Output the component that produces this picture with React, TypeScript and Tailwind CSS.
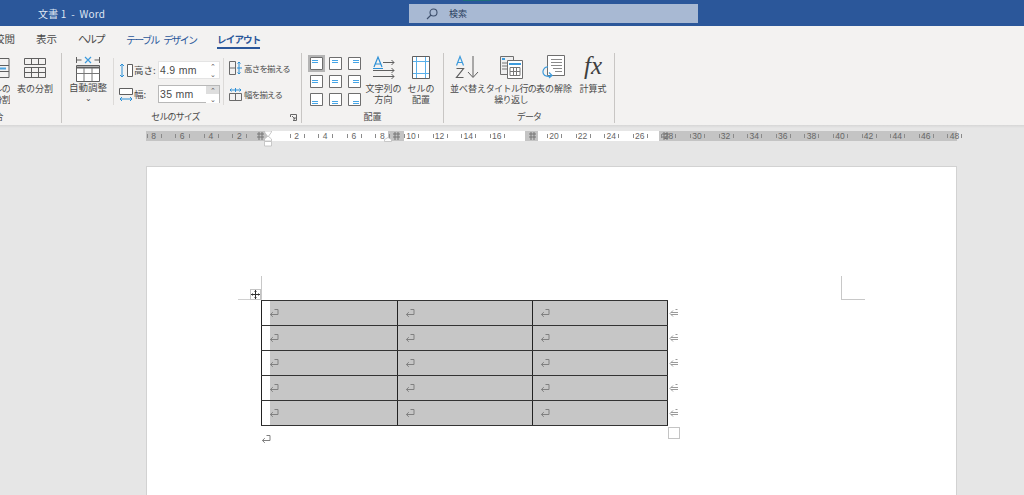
import type { ReactNode } from 'react'

const tabs = [
    { label: '校閲', className: 'w-[36px] -indent-[6px]' },
    { label: '表示', className: 'w-[42px]' },
    { label: 'ヘルプ', className: 'w-[48px] tracking-[-2px]' },
    { label: 'テーブル デザイン', className: 'w-[91px] text-[10px] tracking-[-1.700px] [word-spacing:4px] text-[#2b579a]' },
]

const rulerSegments = [
    { width: 122, gray: true },
    { width: 120, gray: false },
    { width: 16, gray: true },
    { width: 121, gray: false },
    { width: 13, gray: true },
    { width: 121, gray: false },
    { width: 298, gray: true },
]

const rulerUnit = 14.3
const rulerZero = 122
const rulerNumbers = [-8, -6, -4, -2, 2, 4, 6, 8, 10, 12, 14, 16, 20, 22, 24, 26, 28, 30, 32, 34, 36, 38, 40, 42, 44, 46, 48]
const tableMarkers = [111, 247, 383, 516]

const ReturnMark = () => (
    <svg width="10" height="10" viewBox="0 0 10 10" fill="none" stroke="#808080" strokeWidth="1">
        <path d="M5.500 1.500h3.500v5H1.500M3.800 4.200 1.400 6.500l2.400 2.300" />
    </svg>
)

const RowEndMark = () => (
    <svg width="9" height="10" viewBox="0 0 9 10" fill="none" stroke="#9a9a9a" strokeWidth="1">
        <path d="M9 4.500H2M9 6.500H2M4 2.500 1 5.500l3 3M6.500 1.500h2" />
    </svg>
)

const SplitTableIcon = () => (
    <svg width="24" height="22" viewBox="0 0 24 22" fill="none" stroke="#5f5f5f" strokeWidth="1">
        <path d="M1.500 1.500h21v6h-21zM8.500 1.500v6M15.500 1.500v6" />
        <path d="M1.500 10.500h21v10h-21zM1.500 15.500h21M8.500 10.500v10M15.500 10.500v10" />
    </svg>
)

const MergeTableIcon = () => (
    <svg width="10" height="22" viewBox="0 0 10 22" fill="none" strokeWidth="1">
        <path d="M0 1.500h9v19H0M0 8.500h9M0 14.500h9" stroke="#5f5f5f" />
        <path d="M0 11.500h6" stroke="#4aa3df" strokeWidth="2" />
    </svg>
)

const AutoFitIcon = () => (
    <svg width="24" height="26" viewBox="0 0 24 26" fill="none" strokeWidth="1">
        <path d="M.5 1v6M.5 4h5M23.500 1v6M18.500 4h5" stroke="#5f5f5f" />
        <path d="m9 1 6 6M15 1 9 7" stroke="#3d9bdc" strokeWidth="1.200" />
        <path d="M.5 9.500h23v16H.5z" fill="#fff" stroke="#5f5f5f" />
        <path d="M.5 11.500h23" stroke="#5f5f5f" strokeWidth="2" />
        <path d="M.5 17.500h23M8 12v13M16 12v13" stroke="#777" />
    </svg>
)

const HeightIcon = () => (
    <svg width="14" height="15" viewBox="0 0 14 15" fill="none" strokeWidth="1">
        <path d="M3 1v13M1 3l2-2 2 2M1 12l2 2 2-2" stroke="#2b8fd6" />
        <path d="M8.500 1.500h5v12h-5z" fill="#fff" stroke="#5f5f5f" />
    </svg>
)

const WidthIcon = () => (
    <svg width="14" height="15" viewBox="0 0 14 15" fill="none" strokeWidth="1">
        <path d="M.5 1.500h13v6H.5z" fill="#fff" stroke="#5f5f5f" />
        <path d="M1 12h12M3 10l-2 2 2 2M11 10l2 2-2 2" stroke="#2b8fd6" />
    </svg>
)

const DistributeRowsIcon = () => (
    <svg width="13" height="14" viewBox="0 0 13 14" fill="none" strokeWidth="1">
        <path d="M.5.500h6v13h-6zM.5 7h6" stroke="#6a6a6a" />
        <path d="M10 1v12M8.500 2.500 10 1l1.500 1.500M8.500 11.500 10 13l1.500-1.500M8 7h5" stroke="#2b8fd6" />
    </svg>
)

const DistributeColumnsIcon = () => (
    <svg width="13" height="14" viewBox="0 0 13 14" fill="none" strokeWidth="1">
        <path d="M.5 6.500h12v7H.5zM6.500 6.500v7" stroke="#6a6a6a" />
        <path d="M1 3h11M2.500 1.500 1 3l1.500 1.500M10.500 1.500 12 3l-1.500 1.500M6.500 1v4" stroke="#2b8fd6" />
    </svg>
)

const AlignIcon = ({ row, col }: { row: number; col: number }) => {
    const y = [3, 5, 8][row]
    const x = [2, 3, 5][col]
    return (
        <svg width="13" height="13" viewBox="0 0 13 13" fill="none">
            <path d="M.5.500h12v12H.5z" fill="#fff" stroke="#6e6e6e" />
            <path d={`M${x} ${y}.5h6M${x} ${y + 2}.5h6`} stroke="#45a5e6" strokeWidth="1" />
        </svg>
    )
}

const TextDirectionIcon = () => (
    <svg width="24" height="24" viewBox="0 0 24 24" fill="none" strokeWidth="1">
        <path d="M1 13.500h10" stroke="#2b8fd6" />
        <path d="M2 12 6 2l4 10M3.500 9h5" stroke="#2b8fd6" strokeWidth="1.200" />
        <path d="M11 7.500h11M19.500 5 22 7.500 19.500 10M1 15.500h21M19.500 13 22 15.500 19.500 18M1 21.500h21M19.500 19 22 21.500 19.500 24" stroke="#5f5f5f" />
    </svg>
)

const CellMarginIcon = () => (
    <svg width="18" height="23" viewBox="0 0 18 23" fill="none" strokeWidth="1">
        <path d="M.5.500h17v22H.5z" fill="#fff" stroke="#5f5f5f" />
        <path d="M4.500 1v21M13.500 1v21M1 5.500h16M1 17.500h16" stroke="#59b0ea" />
    </svg>
)

const SortIcon = () => (
    <svg width="26" height="24" viewBox="0 0 26 24" fill="none">
        <path d="M1.500 10.500 5 1.500l3.500 9M2.700 7.500h4.600" stroke="#3d9bdc" strokeWidth="1.200" />
        <path d="M1.500 13.500h7l-7 9h7" stroke="#5f5f5f" strokeWidth="1.200" />
        <path d="M18 1v21M13 17l5 5.500 5-5.500" stroke="#5f5f5f" strokeWidth="1" />
    </svg>
)

const RepeatHeaderIcon = () => (
    <svg width="23" height="23" viewBox="0 0 23 23" fill="none" strokeWidth="1">
        <path d="M.5.500h13v18H.5z" fill="#efefef" stroke="#6e6e6e" />
        <path d="M2 2h3v2H2z" fill="#3d9bdc" />
        <path d="M2 7h5M2 10h5M2 13h5" stroke="#777" />
        <path d="M7.500 4.500h15v18h-15z" fill="#fff" stroke="#6e6e6e" />
        <path d="M9 7h12v2H9z" fill="#3d9bdc" />
        <path d="M10 11.500h10v8H10zM10 15.500h10M13.500 11.500v8M16.500 11.500v8" stroke="#777" />
    </svg>
)

const ConvertIcon = () => (
    <svg width="24" height="24" viewBox="0 0 24 24" fill="none" strokeWidth="1">
        <path d="M5.500.500h17v20h-17z" fill="#fff" stroke="#6e6e6e" />
        <path d="M9 4.500h11M9 7.500h11M9 10.500h11M11 13.500h9M13 16.500h7" stroke="#8a8a8a" />
        <path d="M6 12C2 11.500 0 16 1.500 19c1.200 2.400 5 3 8 1.500M7 17.500l3 3-3 2.500" stroke="#3d9bdc" strokeWidth="1.200" />
    </svg>
)

const LaunchIcon = () => (
    <svg width="7" height="7" viewBox="0 0 7 7" fill="none" stroke="#666" strokeWidth="1">
        <path d="M.5 3V.5h6v6H3M2 2l3 3M5 3v2H3" />
    </svg>
)

const RibbonButton = ({ icon, lines, className }: { icon: ReactNode; lines: string[]; className: string }) => (
    <div className={`flex shrink-0 flex-col items-center ${className}`}>
        <div className="flex h-[26px] items-end">{icon}</div>
        <div className="mt-[4px] text-center text-[9px] leading-[11px] whitespace-nowrap">
            {lines.map((line) => (
                <div key={line}>{line}</div>
            ))}
        </div>
    </div>
)

const RibbonGroup = ({ label, className, labelClass, children }: { label: string; className: string; labelClass?: string; children: ReactNode }) => (
    <div className={`relative flex h-[70px] shrink-0 flex-col border-r border-[#c8c6c4] ${className}`}>
        <div className="flex h-[59px] items-start">{children}</div>
        <div className={`text-center text-[9px] leading-[13px] ${labelClass ?? ''}`}>{label}</div>
    </div>
)

const SpinField = ({ value, active }: { value: string; active?: boolean }) => (
    <div className={`flex h-[18px] w-[62px] border bg-white ${active ? 'border-[#b8b8b8]' : 'border-[#e4e4e4]'}`}>
        <div className="flex-1 pl-[1px] font-['Liberation_Sans',sans-serif] text-[10.5px] leading-[16px] tracking-[0.3px]">{value}</div>
        <div className={`flex w-[13px] flex-col text-center text-[7px] leading-[8px] text-[#555] ${active ? 'bg-[#dedede]' : ''}`}>
            <span className={active ? 'border-b border-white' : ''}>⌃</span>
            <span className={active ? 'bg-white' : ''}>⌄</span>
        </div>
    </div>
)

const App = () => {
    const alignRows = [0, 1, 2]
    const tableRows = [0, 1, 2, 3, 4]
    const tableCols = [0, 1, 2]

    return (
        <div className="h-[495px] w-[1024px] overflow-hidden bg-[#e6e6e6] font-['Noto_Sans_CJK_JP','Noto_Sans',sans-serif] text-[#4a4a4a]">
            {/* title bar */}
            <div className="relative flex h-[26px] items-center bg-[#2b579a] text-white">
                <div className="w-[409px] pl-[38px] text-[10px] tracking-[0.15px] text-[#dfe6f2]">文書 1&nbsp; - &nbsp;Word</div>
                <div className="mt-[1px] flex h-[19px] w-[289px] items-center bg-[#a8b9d3] text-[#2a3f5f]">
                    <svg className="ml-[17px]" width="12" height="12" viewBox="0 0 12 12" fill="none" stroke="#3d4f6c" strokeWidth="1.100">
                        <circle cx="7.500" cy="4.500" r="3.500" />
                        <path d="M5 7 1 11" />
                    </svg>
                    <span className="ml-[11px] text-[9px]">検索</span>
                </div>
                <div className="absolute top-0 left-[463px] h-[1px] w-[28px] bg-[#1f6f7a]" />
            </div>

            {/* tabs */}
            <div className="flex h-[24px] items-center bg-[#f3f2f1] pt-[2px] text-[10.5px]">
                {tabs.map((tab) => (
                    <div key={tab.label} className={`shrink-0 whitespace-nowrap ${tab.className}`}>
                        {tab.label}
                    </div>
                ))}
                <div className="relative h-full w-[43px] shrink-0 text-[9.5px] leading-[22px] font-bold tracking-[-0.8px] whitespace-nowrap text-[#2b579a]">
                    レイアウト
                    <div className="absolute right-0 bottom-[1px] left-0 h-[2px] bg-[#2b579a]" />
                </div>
            </div>

            {/* ribbon */}
            <div className="flex h-[75px] bg-[#f3f2f1] pt-[3px]">
                <RibbonGroup label="結合" className="w-[62px] overflow-hidden" labelClass="-ml-[72px]">
                    <div className="w-[10px] shrink-0 overflow-hidden">
                        <div className="flex h-[26px] items-end"><MergeTableIcon /></div>
                        <div className="mt-[4px] -ml-[18px] w-[28px] text-right text-[9px] leading-[11px] tracking-[-0.8px] whitespace-nowrap">
                            <div>セルの</div>
                            <div>分割</div>
                        </div>
                    </div>
                    <RibbonButton icon={<SplitTableIcon />} lines={['表の分割']} className="ml-[7px] w-[36px]" />
                </RibbonGroup>

                <RibbonGroup label="セルのサイズ" className="w-[240px]" labelClass="pr-[12px] tracking-[-0.9px]">
                    <div className="mt-[2px] ml-[1px] flex w-[50px] shrink-0 flex-col items-center">
                        <div className="flex h-[27px] items-end"><AutoFitIcon /></div>
                        <div className="text-[9.5px] leading-[11px] whitespace-nowrap">自動調整</div>
                        <div className="text-[8px] leading-[10px]">⌄</div>
                    </div>
                    <div className="mt-[5px] flex h-[47px] w-[111px] shrink-0 flex-col gap-[6px] border-x border-[#dcdad8] pt-[3px] pl-[5px]">
                        <div className="flex items-center">
                            <HeightIcon />
                            <span className="ml-[1px] w-[24px] text-[9.5px] whitespace-nowrap">高さ:</span>
                            <SpinField value="4.9 mm" />
                        </div>
                        <div className="flex items-center">
                            <WidthIcon />
                            <span className="ml-[1px] w-[24px] text-[9.5px] whitespace-nowrap">幅:</span>
                            <SpinField value="35 mm" active />
                        </div>
                    </div>
                    <div className="mt-[8px] flex flex-col gap-[12px] pl-[5px] text-[8.5px] leading-[14px] tracking-[-0.8px] whitespace-nowrap">
                        <div className="flex gap-[2px]"><DistributeRowsIcon />高さを揃える</div>
                        <div className="flex gap-[2px]"><DistributeColumnsIcon />幅を揃える</div>
                    </div>
                    <div className="absolute right-[4px] bottom-[2px] leading-[0px]"><LaunchIcon /></div>
                </RibbonGroup>

                <RibbonGroup label="配置" className="w-[142px]">
                    <div className="mt-[4px] ml-[8px] grid shrink-0 grid-cols-[13px_13px_13px] gap-x-[6px] gap-y-[5px]">
                        {alignRows.map((row) =>
                            tableCols.map((col) => (
                                <div key={`${row}-${col}`} className={`flex h-[13px] w-[13px] items-center justify-center ${row === 0 && col === 0 ? 'outline-2 outline-[#b4b4b4]' : ''}`}>
                                    <AlignIcon row={row} col={col} />
                                </div>
                            )),
                        )}
                    </div>
                    <RibbonButton icon={<TextDirectionIcon />} lines={['文字列の', '方向']} className="ml-[4px] w-[37px]" />
                    <RibbonButton icon={<CellMarginIcon />} lines={['セルの', '配置']} className="w-[38px]" />
                </RibbonGroup>

                <RibbonGroup label="データ" className="w-[171px]" labelClass="tracking-[-0.8px]">
                    <RibbonButton icon={<SortIcon />} lines={['並べ替え']} className="ml-[2px] w-[44px]" />
                    <RibbonButton icon={<RepeatHeaderIcon />} lines={['タイトル行の', '繰り返し']} className="w-[42px] tracking-[-0.6px]" />
                    <RibbonButton icon={<ConvertIcon />} lines={['表の解除']} className="w-[44px]" />
                    <RibbonButton
                        icon={<span className="font-['Liberation_Serif',serif] text-[25px] leading-[26px] text-[#3f3f3f] italic">fx</span>}
                        lines={['計算式']}
                        className="w-[34px]"
                    />
                </RibbonGroup>
            </div>
            <div className="h-[3px] bg-gradient-to-b from-[#d6d6d6] to-[#e6e6e6]" />

            {/* ruler */}
            <div className="relative mt-[3px] ml-[146px] flex h-[10px] w-[811px]">
                {rulerSegments.map((segment, index) => (
                    <div key={index} className={`shrink-0 ${segment.gray ? 'bg-[#c4c4c4]' : 'bg-white'}`} style={{ width: segment.width }} />
                ))}
                {rulerNumbers.map((n) => (
                    <div key={n} className="absolute top-0 h-[10px]" style={{ left: rulerZero + n * rulerUnit }}>
                        <span className="absolute top-0 left-0 -translate-x-1/2 font-['Liberation_Sans',sans-serif] text-[8.500px] leading-[10px] text-[#666]">
                            {Math.abs(n)}
                        </span>
                        <span className="absolute top-[3px] left-[-7px] h-[4px] w-[1px] bg-[#8a8a8a]" />
                        <span className="absolute top-[3px] left-[7px] h-[4px] w-[1px] bg-[#8a8a8a]" />
                    </div>
                ))}
                {tableMarkers.map((left) => (
                    <svg key={left} className="absolute top-[1px]" style={{ left }} width="7" height="8" viewBox="0 0 7 8" fill="none" stroke="#777" strokeWidth="1">
                        <path d="M2 0v8M5 0v8M0 2h7M0 5h7" />
                    </svg>
                ))}
                <svg className="absolute top-0 left-[118px]" width="8" height="16" viewBox="0 0 8 16" fill="#fff" stroke="#bdbdbd" strokeWidth="0.800">
                    <path d="M.5 0h7v1L4 6 .5 1z" />
                    <path d="M.5 10V8L4 5l3.500 3v2zM.5 10.500h7V15h-7z" />
                </svg>
                <svg className="absolute top-[6px] left-[238px]" width="8" height="5" viewBox="0 0 8 5" fill="#fff" stroke="#bdbdbd" strokeWidth="0.800">
                    <path d="M.5 4.500v-2L4 .5l3.500 2v2z" />
                </svg>
            </div>

            {/* page */}
            <div className="relative mt-[25px] ml-[146px] h-[340px] w-[811px] border border-[#d2d2d2] bg-white pt-[133px] pl-[114px]">
                <div className="absolute top-[109px] left-[114px] h-[24px] w-[1px] bg-[#c8c8c8]" />
                <div className="absolute top-[132px] left-[91px] h-[1px] w-[24px] bg-[#d0d0d0]" />
                <div className="absolute top-[109px] left-[694px] h-[24px] w-[1px] bg-[#c8c8c8]" />
                <div className="absolute top-[132px] left-[694px] h-[1px] w-[24px] bg-[#c8c8c8]" />
                <div className="absolute top-[122px] left-[103px] flex h-[11px] w-[11px] items-center justify-center border border-[#c4c4c4] bg-white">
                    <svg width="9" height="9" viewBox="0 0 9 9" fill="none" stroke="#333" strokeWidth="1">
                        <path d="M4.500 0v9M0 4.500h9M3.500 1.500l1-1 1 1M3.500 7.500l1 1 1-1M1.500 3.500l-1 1 1 1M7.500 3.500l1 1-1 1" />
                    </svg>
                </div>

                <div className="relative w-[407px] border-b border-[#333]">
                    {tableRows.map((row) => (
                        <div key={row} className="grid h-[25px] grid-cols-[136px_135px_136px] border-t border-[#333]">
                            {tableCols.map((col) => (
                                <div key={col} className={`relative flex items-center border-l border-[#222] bg-[#c6c6c6] pl-[8px] ${col === 2 ? 'border-r' : ''}`}>
                                    {col === 0 && <div className="absolute inset-y-0 left-0 w-[8px] bg-white" />}
                                    <span className="relative -mt-[1px] -ml-[1px] leading-[0px]"><ReturnMark /></span>
                                </div>
                            ))}
                            <div className="absolute left-[408px]" style={{ top: row * 25 + 8 }}>
                                <RowEndMark />
                            </div>
                        </div>
                    ))}
                    <div className="absolute top-[127px] left-[407px] h-[12px] w-[12px] border border-[#c4c4c4] bg-white" />
                </div>
                <div className="mt-[8px] leading-[0px]">
                    <ReturnMark />
                </div>
            </div>
        </div>
    )
}

export default App
